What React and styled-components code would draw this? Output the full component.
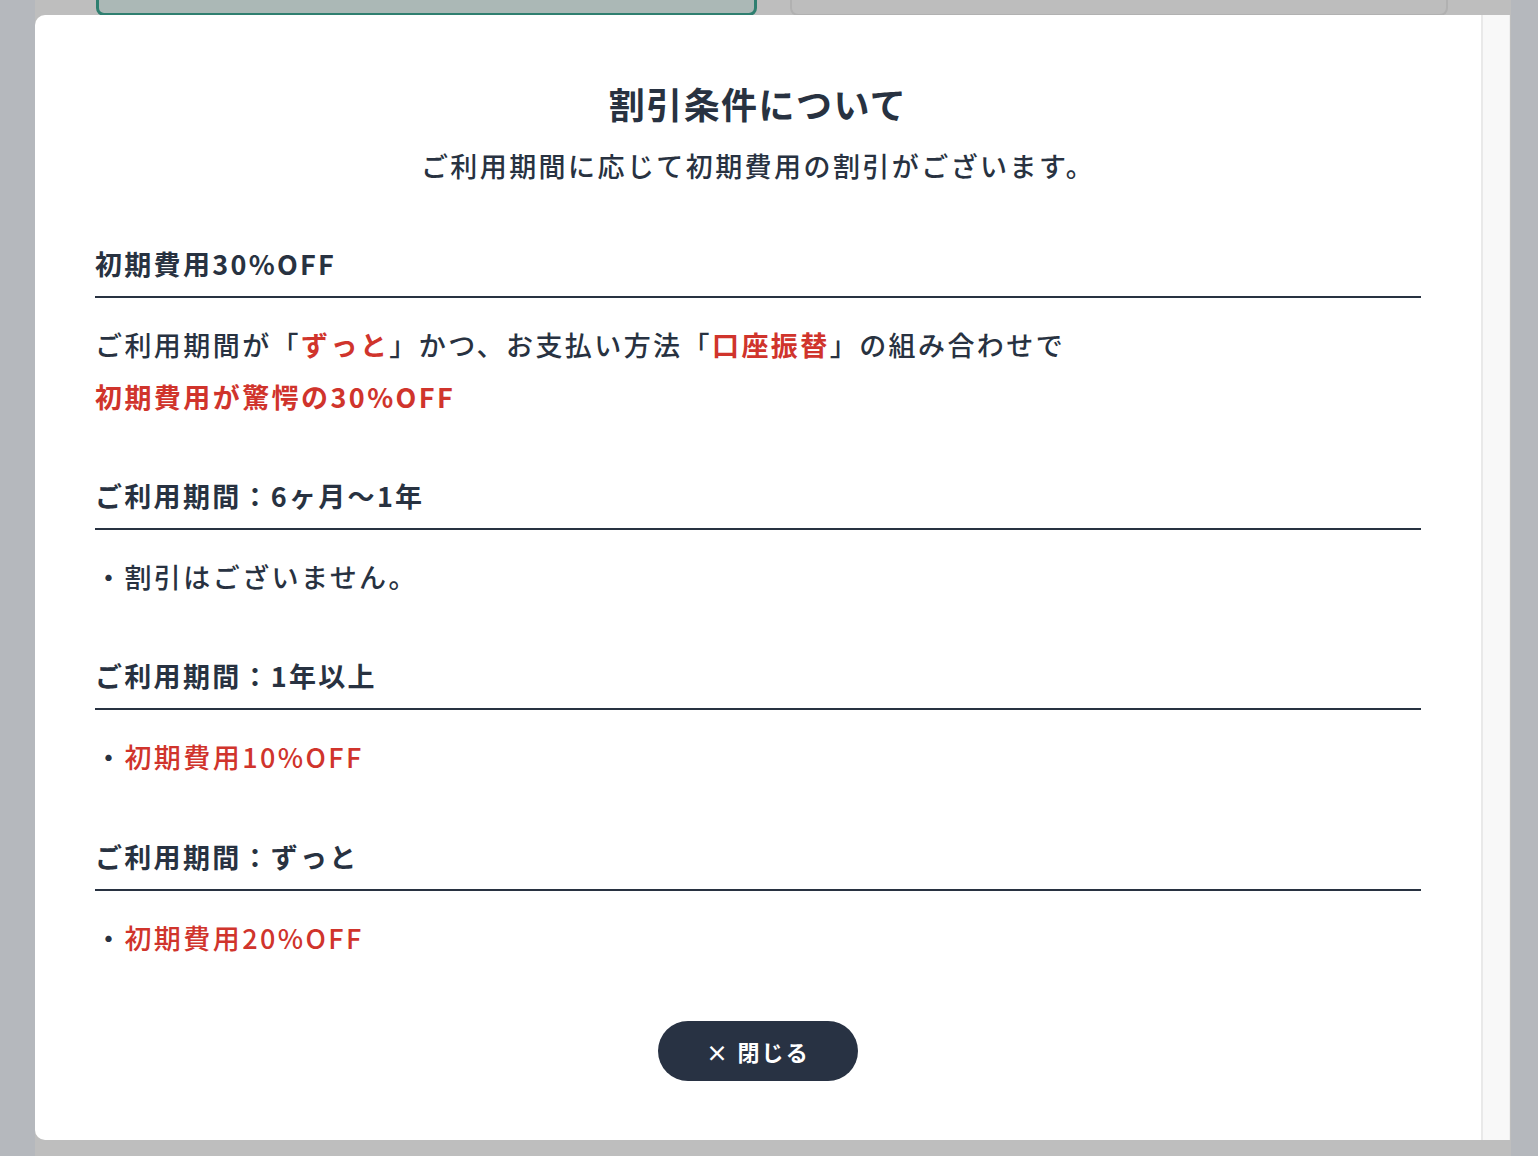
import React from "react";
import styled, { createGlobalStyle } from "styled-components";

const GlobalStyle = createGlobalStyle`
    html, body {
        margin: 0;
        padding: 0;
        background: #b5b8bd;
        font-family: "Noto Sans CJK JP", "Noto Sans", sans-serif;
        color: #283241;
    }
    * {
        box-sizing: border-box;
    }
`;

const Screen = styled.div`
    position: relative;
    width: 1538px;
    height: 1156px;
    overflow: hidden;
`;

const Page = styled.div`
    margin-left: 35px;
    width: 1476px;
    height: 100%;
    background: #bebebe;
`;

const CardRow = styled.div`
    display: flex;
    gap: 33px;
    padding-left: 61px;
`;

const Card = styled.div`
    width: ${props => props.width}px;
    height: 26px;
    margin-top: -10px;
    border: ${props => props.active ? "3px solid #2f7f70" : "2px solid #b1b1b1"};
    border-radius: 8px;
    background: ${props => props.active ? "#abb8b6" : "#bdbdbd"};
`;

const Modal = styled.div`
    position: absolute;
    top: 15px;
    left: 35px;
    width: 1475px;
    height: 1125px;
    display: flex;
    background: #ffffff;
    border-radius: 10px 0 0 10px;
    overflow: hidden;
`;

const ModalBody = styled.div`
    flex: 1;
    padding: 63px 60px 60px;
`;

const ScrollTrack = styled.div`
    width: 29px;
    background: #f8f8f8;
    border-left: 2px solid #e9e9e9;
    border-right: 1px solid #efefef;
`;

const Title = styled.h2`
    margin: 0;
    font-size: 36px;
    line-height: 51px;
    font-weight: 700;
    letter-spacing: 0.04em;
    text-align: center;
`;

const Lead = styled.p`
    margin: 11px 0 0;
    font-size: 27px;
    line-height: 51.2px;
    font-weight: 500;
    letter-spacing: 0.09em;
    text-align: center;
`;

const Sections = styled.div`
    display: flex;
    flex-direction: column;
    gap: 48px;
    margin-top: 47px;
`;

const Section = styled.section``;

const Heading = styled.h3`
    margin: 0;
    padding-bottom: 7px;
    border-bottom: 2px solid #283241;
    font-size: 27px;
    line-height: 51.2px;
    font-weight: 700;
    letter-spacing: 0.085em;
`;

const Body = styled.p`
    margin: 21px 0 0;
    font-size: 27px;
    line-height: 51.2px;
    font-weight: 500;
    letter-spacing: 0.09em;
`;

const Red = styled.span`
    color: #d0342c;
    font-weight: ${props => props.bold ? 700 : 500};
`;

const Footer = styled.div`
    display: flex;
    justify-content: center;
    margin-top: 58px;
`;

const CloseButton = styled.button`
    width: 200px;
    height: 60px;
    border: none;
    border-radius: 30px;
    background: #283243;
    color: #ffffff;
    font-family: "Noto Sans CJK JP", "Noto Sans", sans-serif;
    font-size: 22px;
    font-weight: 700;
    letter-spacing: 0.1em;
    cursor: pointer;
`;

const sections = [
    {
        title: "初期費用30%OFF",
        body: (
            <>
                ご利用期間が「<Red bold>ずっと</Red>」かつ、お支払い方法「<Red bold>口座振替</Red>」の組み合わせで
                <br />
                <Red bold>初期費用が驚愕の30%OFF</Red>
            </>
        ),
    },
    { title: "ご利用期間：6ヶ月〜1年", body: <>・割引はございません。</> },
    { title: "ご利用期間：1年以上", body: <>・<Red>初期費用10%OFF</Red></> },
    { title: "ご利用期間：ずっと", body: <>・<Red>初期費用20%OFF</Red></> },
];

const App = () => {
    return (
        <Screen>
            <GlobalStyle />
            <Page>
                <CardRow>
                    <Card active width={661} />
                    <Card width={658} />
                </CardRow>
            </Page>
            <Modal>
                <ModalBody>
                    <Title>割引条件について</Title>
                    <Lead>ご利用期間に応じて初期費用の割引がございます。</Lead>
                    <Sections>
                        {sections.map((section, index) => (
                            <Section key={index}>
                                <Heading>{section.title}</Heading>
                                <Body>{section.body}</Body>
                            </Section>
                        ))}
                    </Sections>
                    <Footer>
                        <CloseButton>× 閉じる</CloseButton>
                    </Footer>
                </ModalBody>
                <ScrollTrack />
            </Modal>
        </Screen>
    );
};

export default App;
